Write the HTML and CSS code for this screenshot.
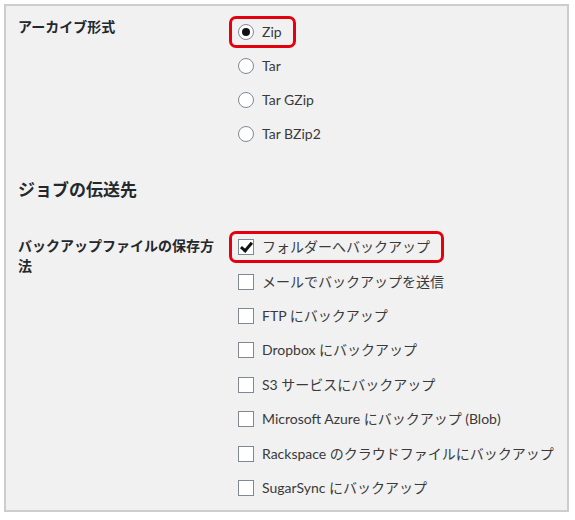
FILE: index.html
```html
<!DOCTYPE html>
<html lang="ja">
<head>
  <meta charset="UTF-8">
  <title>ジョブ設定</title>
  <link rel="stylesheet" href="styles.css">
</head>
<body>
  <div class="panel">
    <div class="row">
      <div class="row-label">アーカイブ形式</div>
      <div class="options radios">
        <div class="option"><label class="pick marked"><span class="radio on"></span>Zip</label></div>
        <div class="option"><label class="pick"><span class="radio"></span>Tar</label></div>
        <div class="option"><label class="pick"><span class="radio"></span>Tar GZip</label></div>
        <div class="option"><label class="pick"><span class="radio"></span>Tar BZip2</label></div>
      </div>
    </div>

    <h3 class="section-title">ジョブの伝送先</h3>

    <div class="row">
      <div class="row-label second">バックアップファイルの保存方法</div>
      <div class="options checks">
        <div class="option"><label class="pick marked"><span class="check on"></span>フォルダーへバックアップ</label></div>
        <div class="option"><label class="pick"><span class="check"></span>メールでバックアップを送信</label></div>
        <div class="option"><label class="pick"><span class="check"></span>FTP にバックアップ</label></div>
        <div class="option"><label class="pick"><span class="check"></span>Dropbox にバックアップ</label></div>
        <div class="option"><label class="pick"><span class="check"></span>S3 サービスにバックアップ</label></div>
        <div class="option"><label class="pick"><span class="check"></span>Microsoft Azure にバックアップ (Blob)</label></div>
        <div class="option"><label class="pick"><span class="check"></span>Rackspace のクラウドファイルにバックアップ</label></div>
        <div class="option"><label class="pick"><span class="check"></span>SugarSync にバックアップ</label></div>
      </div>
    </div>
  </div>
</body>
</html>
```

FILE: styles.css
```css
body {
  margin: 0;
  background: #fff;
  font-family: "Segoe UI", Lato, "Noto Sans CJK JP", sans-serif;
  font-size: 14px;
  color: #23282d;
}
.panel {
  margin: 4px 6px 4px 4px;
  height: 508px;
  box-sizing: border-box;
  border: 2px solid #cdcdcd;
  background: #f1f1f1;
  padding: 9px 12px 0;
}
.row {
  display: grid;
  grid-template-columns: 211px 1fr;
}
.row-label {
  width: 200px;
  font-weight: bold;
  line-height: 20px;
  padding-top: 2px;
}
.row-label.second {
  padding-top: 6px;
}
.options {
  display: flex;
  flex-direction: column;
}
.option {
  height: 34px;
  display: flex;
  align-items: center;
}
.checks .option {
  height: 34.4px;
}
.pick {
  display: inline-flex;
  align-items: center;
  gap: 8px;
  height: 18px;
  padding: 4px 11px 4px 6px;
  border: 3px solid transparent;
  border-radius: 7px;
  color: #3a3a3a;
  line-height: 18px;
  white-space: nowrap;
}
.pick.marked {
  border-color: #e3000f;
}
.radio, .check {
  width: 14px;
  height: 14px;
  flex: none;
  border: 1px solid #7e8993;
  background: #fff;
  position: relative;
}
.radio {
  border-radius: 50%;
}
.radio.on::after {
  content: "";
  position: absolute;
  left: 3px;
  top: 3px;
  width: 8px;
  height: 8px;
  border-radius: 50%;
  background: #111;
}
.check.on::after {
  content: "";
  position: absolute;
  left: 4px;
  top: 0;
  width: 4px;
  height: 9px;
  border: solid #111;
  border-width: 0 3px 3px 0;
  transform: rotate(40deg);
}
.section-title {
  margin: 27px 0 28px;
  font-size: 17px;
  line-height: 24px;
  font-weight: bold;
}
```
